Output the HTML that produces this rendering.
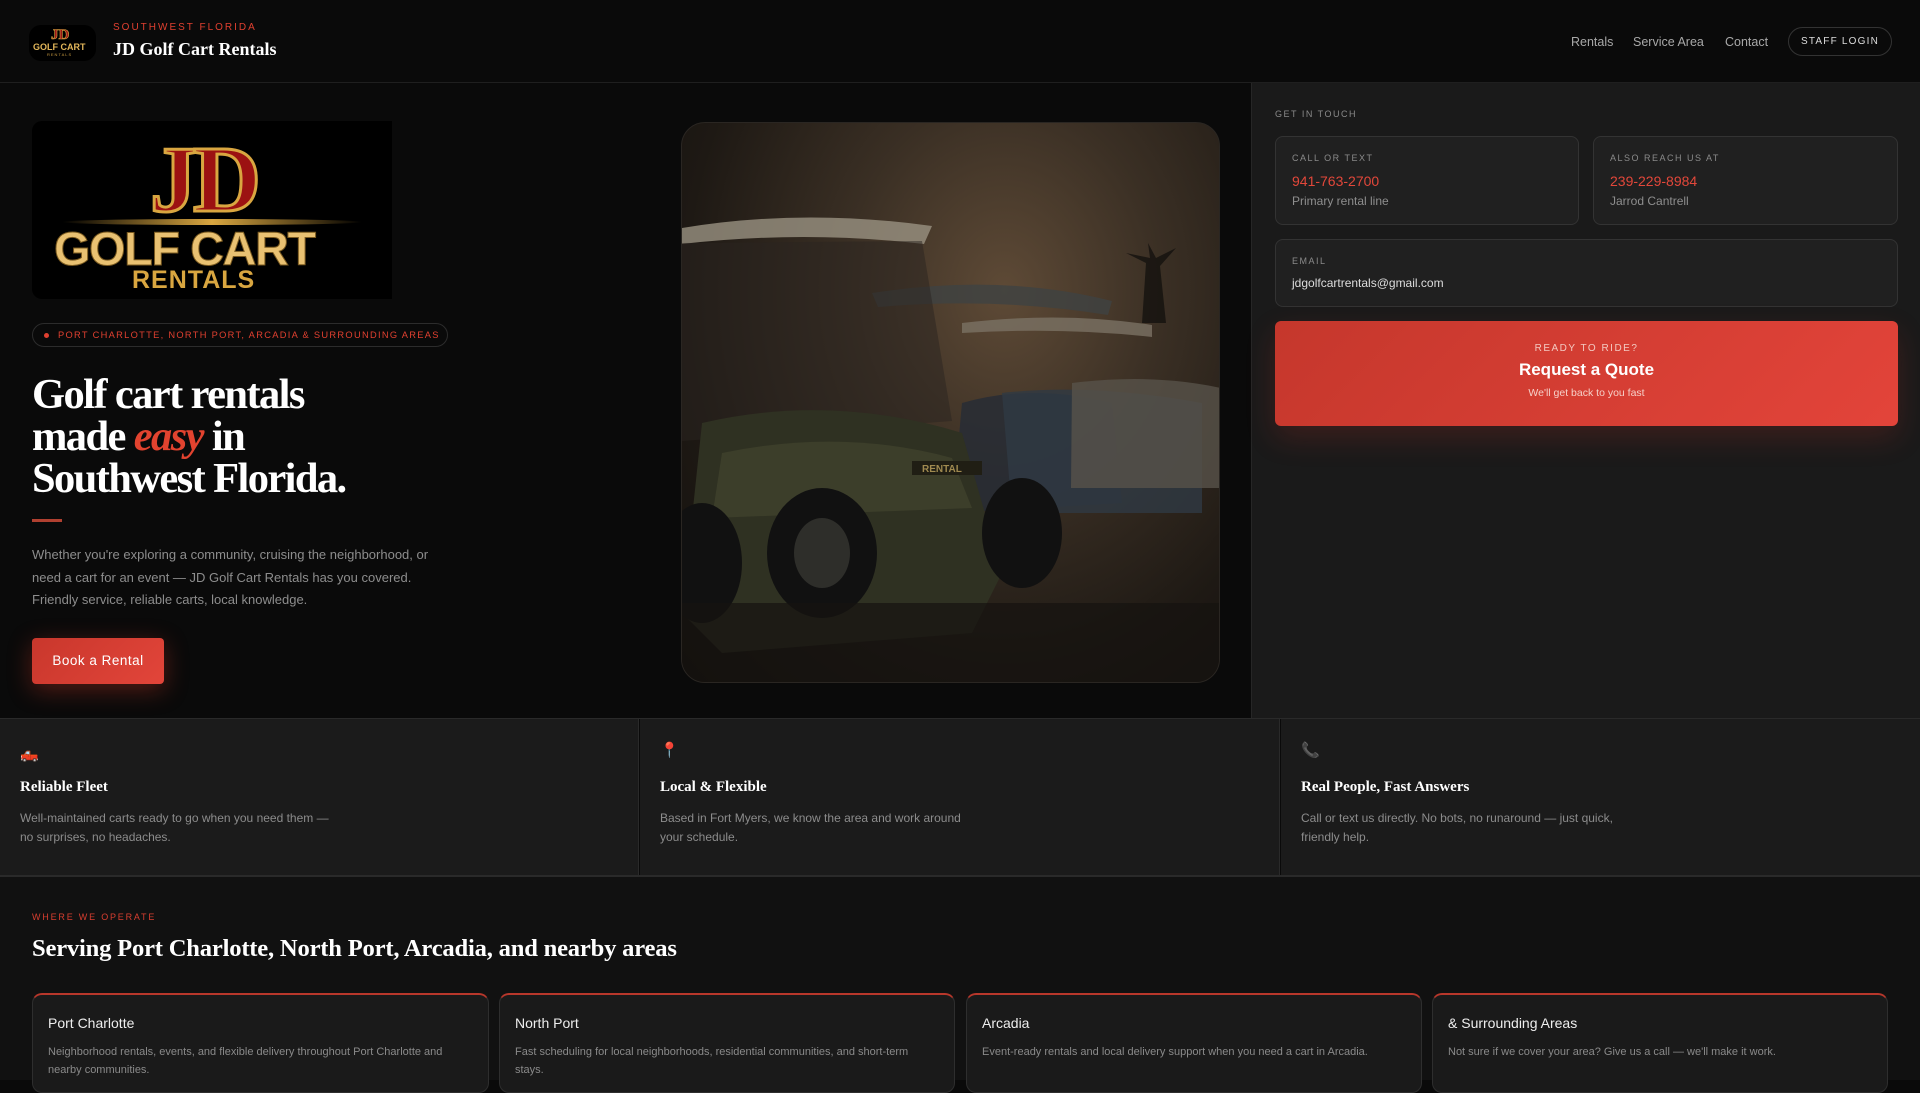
<!DOCTYPE html>
<html><head><meta charset="utf-8"><style>
*{box-sizing:border-box;margin:0;padding:0}
body{width:1920px;height:1080px;overflow:hidden;background:#0a0a0a;font-family:"Liberation Sans",sans-serif;color:#fff;position:relative}
.abs{position:absolute}
.serif{font-family:"Liberation Serif",serif;font-weight:bold}
header{position:absolute;left:0;top:0;width:1920px;height:83px;border-bottom:1px solid #1f1f1f;background:#0a0a0a}
.nav a{position:absolute;top:35px;font-size:12.5px;color:#a8a8a8;text-decoration:none}
.card{position:absolute;background:#202020;border:1px solid #333;border-radius:8px}
.lbl{font-size:9px;letter-spacing:1.5px;color:#8a8a8a}
.feat{position:absolute;top:719px;height:157px;background:#1b1b1b}
.feat h3{position:absolute;left:20px;top:60px;font-family:"Liberation Serif",serif;font-size:15px}
.feat p{position:absolute;left:20px;top:90px;width:320px;font-size:12px;line-height:19px;color:#8c8c8c}
.area{position:absolute;top:993px;height:100px;background:#1a1a1a;border:1px solid #2e2e2e;border-top:2px solid #b8372b;border-radius:10px}
.area h4{position:absolute;left:15px;top:20px;font-size:14px;font-weight:normal;color:#eee}
.area p{position:absolute;left:15px;top:48px;width:420px;font-size:11px;line-height:18px;color:#8a8a8a}
</style></head><body>
<header>
 <div class="abs" style="left:29px;top:25px;width:67px;height:36px;border-radius:12px;background:#000;overflow:hidden">
  <div class="abs serif" style="left:22px;top:2px;font-size:15px;color:#a01818;-webkit-text-stroke:0.6px #d9a640">JD</div>
  <div class="abs" style="left:4px;top:17px;font-size:9px;font-weight:bold;color:#e2b65a;white-space:nowrap">GOLF CART</div>
  <div class="abs" style="left:18px;top:27px;font-size:4px;color:#c99b40;letter-spacing:1px">RENTALS</div>
 </div>
 <div class="abs" style="left:113px;top:22px;font-size:10px;letter-spacing:2px;color:#e04030">SOUTHWEST FLORIDA</div>
 <div class="abs serif" style="left:113px;top:39px;font-size:18px;color:#fff">JD Golf Cart Rentals</div>
 <div class="nav"><a style="left:1571px">Rentals</a><a style="left:1633px">Service Area</a><a style="left:1725px">Contact</a></div>
 <div class="abs" style="left:1788px;top:27px;width:104px;height:29px;border:1px solid #333;border-radius:15px;font-size:10px;letter-spacing:1.2px;color:#ddd;text-align:center;line-height:27px">STAFF LOGIN</div>
</header>

<!-- hero left -->
<div class="abs" style="left:32px;top:121px;width:360px;height:178px;background:#000;border-radius:10px 0 0 10px;overflow:hidden">
 <div class="abs serif" style="left:118px;top:12px;font-size:94px;line-height:94px;color:#9c1212;-webkit-text-stroke:3px #d9a640;letter-spacing:-4px">JD</div>
 <div class="abs" style="left:30px;top:98px;width:300px;height:6px;border-radius:50%;background:linear-gradient(90deg,transparent,#d9a640,transparent)"></div>
 <div class="abs" style="left:22px;top:100px;font-size:47px;font-weight:bold;color:#e9c172;white-space:nowrap;letter-spacing:-1.5px;-webkit-text-stroke:1px #7a5a20">GOLF CART</div>
 <div class="abs" style="left:100px;top:145px;font-size:25px;font-weight:bold;color:#d9a640;letter-spacing:1px">RENTALS</div>
</div>
<div class="abs" style="left:32px;top:323px;width:416px;height:24px;border:1px solid #2c2c2c;border-radius:12px;font-size:9.3px;letter-spacing:1.3px;color:#e04030;line-height:22px;padding-left:25px;white-space:nowrap">PORT CHARLOTTE, NORTH PORT, ARCADIA &amp; SURROUNDING AREAS
 <span class="abs" style="left:11px;top:9px;width:5px;height:5px;border-radius:50%;background:#e04030"></span></div>
<div class="abs serif" style="left:32px;top:374px;font-size:42.5px;line-height:42px;letter-spacing:-1.6px;color:#fff">Golf cart rentals<br>made <i style="color:#e2432f">easy</i> in<br>Southwest Florida.</div>
<div class="abs" style="left:32px;top:519px;width:30px;height:3px;background:#b04030"></div>
<div class="abs" style="left:32px;top:544px;width:420px;font-size:13px;line-height:22.5px;color:#8d8d8d">Whether you're exploring a community, cruising the neighborhood, or need a cart for an event — JD Golf Cart Rentals has you covered. Friendly service, reliable carts, local knowledge.</div>
<div class="abs" style="left:32px;top:638px;width:132px;height:46px;border-radius:4px;background:linear-gradient(135deg,#c9372c,#e2453a);box-shadow:0 6px 24px rgba(220,60,40,.35);font-size:13.5px;letter-spacing:.5px;text-align:center;line-height:46px">Book a Rental</div>

<!-- image -->
<div class="abs" style="left:681px;top:122px;width:539px;height:561px;border-radius:24px;overflow:hidden;border:1px solid #2a2622;background:radial-gradient(ellipse at 60% 30%,#5e4a36 0%,#3a2f24 35%,#1e1914 70%,#120f0c 100%)">
<svg width="539" height="561" viewBox="0 0 539 561">
 <g fill="#0e0d0b" opacity=".7"><path d="M460 200 l4 -60 l-20 -10 l24 5 l-2 -15 l8 15 l20 -10 l-16 18 l6 57z"/></g>
 <path d="M190 170 q130 -20 240 8 l-4 14 q-110 -18 -230 -8z" fill="#3e4242" opacity=".8"/>
 <path d="M280 200 q100 -12 190 2 l0 12 q-90 -10 -190 -4z" fill="#7a7264" opacity=".8"/>
 <path d="M0 105 q120 -20 250 -2 l-8 18 q-120 -14 -242 0z" fill="#9a9282" opacity=".8"/>
 <path d="M0 120 l240 -2 l30 180 l-270 20z" fill="#2a2420" opacity=".5"/>
 <path d="M280 280 q70 -20 150 0 l10 100 l-170 10z" fill="#262c36" opacity=".8"/>
 <path d="M320 270 q90 -10 200 10 l0 110 l-190 0z" fill="#2f3944" opacity=".8"/>
 <path d="M390 260 q80 -10 149 5 l0 100 l-150 0z" fill="#57534a" opacity=".8"/>
 <path d="M20 300 q130 -30 260 10 l40 140 l-30 60 l-250 20 l-40 -40z" fill="#2f3122"/>
 <path d="M40 330 q120 -25 230 5 l20 50 l-260 10z" fill="#3c3e2a"/>
 <rect x="230" y="338" width="70" height="14" fill="#201e14"/>
 <text x="240" y="349" font-family="Liberation Sans" font-size="10" font-weight="bold" fill="#a08a50">RENTAL</text>
 <ellipse cx="140" cy="430" rx="55" ry="65" fill="#111"/>
 <ellipse cx="140" cy="430" rx="28" ry="35" fill="#2e2e2a"/>
 <ellipse cx="340" cy="410" rx="40" ry="55" fill="#111"/>
 <ellipse cx="20" cy="440" rx="40" ry="60" fill="#111"/>
 <rect x="0" y="480" width="539" height="81" fill="#16120f" opacity=".7"/>
</svg></div>

<!-- right panel -->
<div class="abs" style="left:1251px;top:83px;width:669px;height:636px;background:#1a1a1a;border-left:1px solid #262626"></div>
<div class="abs lbl" style="left:1275px;top:109px">GET IN TOUCH</div>
<div class="card" style="left:1275px;top:136px;width:304px;height:89px"><div class="abs lbl" style="left:16px;top:16px">CALL OR TEXT</div><div class="abs" style="left:16px;top:36px;font-size:14px;color:#e2473a">941-763-2700</div><div class="abs" style="left:16px;top:57px;font-size:12px;color:#8e8e8e">Primary rental line</div></div>
<div class="card" style="left:1593px;top:136px;width:305px;height:89px"><div class="abs lbl" style="left:16px;top:16px">ALSO REACH US AT</div><div class="abs" style="left:16px;top:36px;font-size:14px;color:#e2473a">239-229-8984</div><div class="abs" style="left:16px;top:57px;font-size:12px;color:#8e8e8e">Jarrod Cantrell</div></div>
<div class="card" style="left:1275px;top:239px;width:623px;height:68px"><div class="abs lbl" style="left:16px;top:16px">EMAIL</div><div class="abs" style="left:16px;top:36px;font-size:12px;color:#ddd">jdgolfcartrentals@gmail.com</div></div>
<div class="abs" style="left:1275px;top:321px;width:623px;height:105px;border-radius:6px;background:linear-gradient(135deg,#c5372c,#e3443a);box-shadow:0 12px 30px rgba(200,50,40,.2);text-align:center">
 <div style="margin-top:22px;font-size:10px;letter-spacing:1.5px;color:#f3c8c0">READY TO RIDE?</div>
 <div style="margin-top:6px;font-size:17px;font-weight:bold">Request a Quote</div>
 <div style="margin-top:7px;font-size:10.5px;color:#f6d0c8">We'll get back to you fast</div>
</div>

<!-- features -->
<div class="abs" style="left:0;top:718px;width:1920px;height:1px;background:#2a2a2a"></div>
<div class="feat" style="left:0;width:639px;border-right:1px solid #2a2a2a"><div class="abs" style="left:20px;top:26px;font-size:15px;color:#e2432f">🛻</div><h3>Reliable Fleet</h3><p>Well-maintained carts ready to go when you need them — no surprises, no headaches.</p></div>
<div class="feat" style="left:640px;width:640px;border-right:1px solid #2a2a2a"><div class="abs" style="left:20px;top:22px;font-size:15px;color:#e2432f">📍</div><h3>Local &amp; Flexible</h3><p>Based in Fort Myers, we know the area and work around your schedule.</p></div>
<div class="feat" style="left:1281px;width:639px"><div class="abs" style="left:20px;top:22px;font-size:15px;color:#666">📞</div><h3>Real People, Fast Answers</h3><p>Call or text us directly. No bots, no runaround — just quick, friendly help.</p></div>
<div class="abs" style="left:0;top:875px;width:1920px;height:2px;background:#2a2a2a"></div>

<!-- areas -->
<div class="abs" style="left:0;top:877px;width:1920px;height:203px;background:#111"></div>
<div class="abs" style="left:32px;top:912px;font-size:9px;letter-spacing:1.8px;color:#d83e30">WHERE WE OPERATE</div>
<div class="abs serif" style="left:32px;top:935px;font-size:24.6px;letter-spacing:-.2px">Serving Port Charlotte, North Port, Arcadia, and nearby areas</div>
<div class="area" style="left:32px;width:457px"><h4>Port Charlotte</h4><p>Neighborhood rentals, events, and flexible delivery throughout Port Charlotte and nearby communities.</p></div>
<div class="area" style="left:499px;width:456px"><h4>North Port</h4><p>Fast scheduling for local neighborhoods, residential communities, and short-term stays.</p></div>
<div class="area" style="left:966px;width:456px"><h4>Arcadia</h4><p>Event-ready rentals and local delivery support when you need a cart in Arcadia.</p></div>
<div class="area" style="left:1432px;width:456px"><h4>&amp; Surrounding Areas</h4><p>Not sure if we cover your area? Give us a call — we'll make it work.</p></div>
</body></html>
